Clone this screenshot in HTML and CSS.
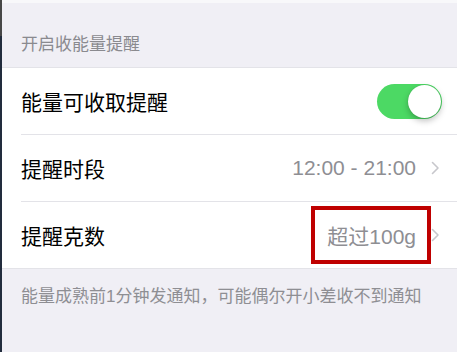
FILE: index.html
```html
<!DOCTYPE html>
<html lang="zh-CN">
<head>
  <meta charset="UTF-8">
  <title>开启收能量提醒</title>
  <link rel="stylesheet" href="styles.css">
</head>
<body>

<div class="edge"></div>

<div class="page">
  <div class="section-title">开启收能量提醒</div>

  <div class="group">
    <div class="row">
      <span class="label">能量可收取提醒</span>
      <span class="switch on"><span class="knob"></span></span>
    </div>
    <div class="row">
      <span class="label">提醒时段</span>
      <span class="value">12:00 - 21:00</span>
      <svg class="chevron" width="9" height="14" viewBox="0 0 9 14">
        <path d="M1.5 1.5 L7 7 L1.5 12.5" fill="none" stroke="#c7c7cc" stroke-width="1.6" stroke-linecap="round" stroke-linejoin="round"/>
      </svg>
    </div>
    <div class="row">
      <span class="label">提醒克数</span>
      <span class="value marked">超过100g</span>
      <svg class="chevron" width="9" height="14" viewBox="0 0 9 14">
        <path d="M1.5 1.5 L7 7 L1.5 12.5" fill="none" stroke="#c7c7cc" stroke-width="1.6" stroke-linecap="round" stroke-linejoin="round"/>
      </svg>
    </div>
  </div>

  <div class="section-note">能量成熟前1分钟发通知，可能偶尔开小差收不到通知</div>
</div>

</body>
</html>
```

FILE: styles.css
```css
html, body {
  margin: 0;
  height: 100%;
}

body {
  display: flex;
  background-color: #f0eff5;
  font-family: "Liberation Sans", "Noto Sans CJK SC", sans-serif;
  overflow: hidden;
}

/* dark sliver of the window behind */
.edge {
  width: 2px;
  flex: none;
  background: linear-gradient(#474747 0, #474747 36px, #222c3d 36px);
}

.page {
  flex: 1;
  border-top: 3px solid #f8f8fa;
}

.section-title {
  height: 64px;
  box-sizing: border-box;
  padding: 32px 0 0 19px;
  font-size: 17px;
  line-height: 20px;
  color: #8a8a8f;
}

.group {
  background-color: #fff;
  border-top: 1px solid #e3e3e8;
  border-bottom: 1px solid #e3e3e8;
}

.row {
  display: flex;
  align-items: center;
  height: 66px;
  margin-left: 19px;
  padding-right: 17px;
  border-bottom: 1px solid #e3e3e8;
  position: relative;
}

.row:last-child {
  border-bottom: none;
}

.label {
  flex: 1;
  font-size: 21px;
  color: #000;
}

.value {
  font-size: 21px;
  color: #8e8e93;
  margin-right: 15px;
}

.chevron {
  display: block;
}

/* red annotation box */
.marked::after {
  content: "";
  position: absolute;
  left: 290px;
  top: 4px;
  width: 112px;
  height: 50px;
  border: 4px solid #bf0000;
}

/* iOS style switch */
.switch {
  width: 65px;
  height: 35px;
  border-radius: 18px;
  background-color: #4cd964;
  position: relative;
  margin-right: -2px;
}

.knob {
  position: absolute;
  right: 1px;
  top: 1px;
  width: 33px;
  height: 33px;
  border-radius: 50%;
  background-color: #fff;
  box-shadow: 0 3px 6px rgba(0, 0, 0, 0.25), 0 0 1px rgba(0, 0, 0, 0.2);
}

.section-note {
  padding: 18px 0 0 19px;
  font-size: 17px;
  line-height: 20px;
  color: #8e8e93;
}
```
